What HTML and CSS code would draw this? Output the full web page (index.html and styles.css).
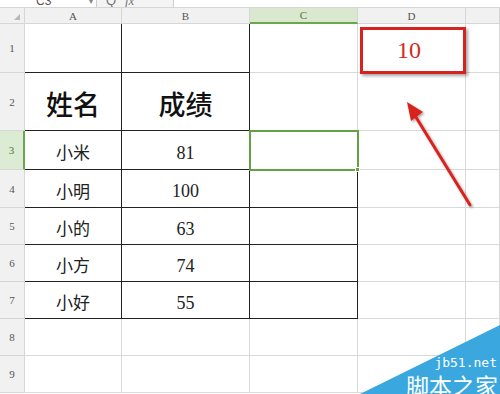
FILE: index.html
```html
<!DOCTYPE html>
<html>
<head>
<meta charset="utf-8">
<link rel="stylesheet" href="styles.css">
</head>
<body>
<div class="app">
  <div class="topbar">
    <div class="namebox"><span class="nb-text">C3</span><span class="nb-caret">▾</span></div>
    <div class="fxicons"><span class="fx-q">Q</span><span class="fx-f">fx</span></div>
    <div class="formula"></div>
  </div>
  <div class="sheet">
    <div class="corner"><span class="corner-tri"></span></div>
    <div class="colhead">A</div>
    <div class="colhead">B</div>
    <div class="colhead active">C</div>
    <div class="colhead">D</div>
    <div class="colhead"></div>

    <div class="rowhead">1</div>
    <div class="cell t tl"></div>
    <div class="cell t"></div>
    <div class="cell"></div>
    <div class="cell red">10</div>
    <div class="cell"></div>

    <div class="rowhead">2</div>
    <div class="cell t tl big">姓名</div>
    <div class="cell t big">成绩</div>
    <div class="cell"></div>
    <div class="cell"></div>
    <div class="cell"></div>

    <div class="rowhead active">3</div>
    <div class="cell t tl name">小米</div>
    <div class="cell t num">81</div>
    <div class="cell t sel"><span class="handle"></span></div>
    <div class="cell"></div>
    <div class="cell"></div>

    <div class="rowhead">4</div>
    <div class="cell t tl name">小明</div>
    <div class="cell t num">100</div>
    <div class="cell t"></div>
    <div class="cell"></div>
    <div class="cell"></div>

    <div class="rowhead">5</div>
    <div class="cell t tl name">小的</div>
    <div class="cell t num">63</div>
    <div class="cell t"></div>
    <div class="cell"></div>
    <div class="cell"></div>

    <div class="rowhead">6</div>
    <div class="cell t tl name">小方</div>
    <div class="cell t num">74</div>
    <div class="cell t"></div>
    <div class="cell"></div>
    <div class="cell"></div>

    <div class="rowhead">7</div>
    <div class="cell t tl name">小好</div>
    <div class="cell t num">55</div>
    <div class="cell t"></div>
    <div class="cell"></div>
    <div class="cell"></div>

    <div class="rowhead">8</div>
    <div class="cell"></div>
    <div class="cell"></div>
    <div class="cell"></div>
    <div class="cell"></div>
    <div class="cell"></div>

    <div class="rowhead">9</div>
    <div class="cell"></div>
    <div class="cell"></div>
    <div class="cell"></div>
    <div class="cell"></div>
    <div class="cell"></div>
  </div>

  <div class="redbox"></div>
  <svg class="arrow" width="500" height="394" viewBox="0 0 500 394">
    <defs>
      <filter id="sh" x="-20%" y="-20%" width="140%" height="140%">
        <feDropShadow dx="1.5" dy="1.5" stdDeviation="1" flood-color="#000" flood-opacity="0.35"/>
      </filter>
    </defs>
    <g filter="url(#sh)">
      <line x1="470" y1="205" x2="414" y2="114" stroke="#d9221c" stroke-width="3" stroke-linecap="round"/>
      <polygon points="407,102 423,112 411,121" fill="#d9221c"/>
    </g>
  </svg>
  <svg class="wm-tri" width="500" height="394" viewBox="0 0 500 394">
    <polygon points="360,394 500,394 500,325" fill="#3aa8de"/>
  </svg>
  <div class="wm-text">
    <div class="wm-url">jb51.net</div>
    <div class="wm-cn">脚本之家</div>
  </div>
</div>
</body>
</html>
```
FILE: styles.css
```css
* { box-sizing: border-box; }
html, body { margin: 0; padding: 0; background: #fff; }
.app {
  position: relative;
  width: 500px;
  height: 394px;
  overflow: hidden;
  font-family: "Liberation Serif", serif;
}
.topbar {
  height: 8px;
  display: flex;
  background: #f4f4f4;
  border-bottom: 1px solid #d6d6d6;
  overflow: hidden;
}
.namebox {
  width: 97px;
  background: #fff;
  border-right: 1px solid #cfcfcf;
  position: relative;
  font: 12px/12px "Liberation Sans", sans-serif;
  color: #555;
}
.nb-text { position: absolute; left: 36px; top: -5px; }
.nb-caret { position: absolute; left: 89px; top: -4px; font-size: 8px; color: #888; }
.fxicons {
  width: 76px;
  position: relative;
  font: 13px/13px "Liberation Serif", serif;
  color: #777;
}
.fx-q { position: absolute; left: 9px; top: -6px; font-family: "Liberation Sans", sans-serif; }
.fx-f { position: absolute; left: 28px; top: -6px; font-style: italic; }
.formula {
  flex: 1;
  background: #fff;
  border-left: 1px solid #cfcfcf;
}
.sheet {
  display: grid;
  grid-template-columns: 25px 97px 128px 108px 108px 34px;
  grid-template-rows: 16px 49px 58px 39px 38px 37px 37px 37px 37px 37px 38px;
}
.corner, .colhead, .rowhead {
  background: #f1f1f1;
  border-right: 1px solid #d6d6d6;
  border-bottom: 1px solid #d6d6d6;
  color: #555;
  font: 11px "Liberation Serif", serif;
  display: flex;
  align-items: center;
  justify-content: center;
}
.corner { position: relative; }
.corner-tri {
  position: absolute;
  right: 4px;
  bottom: 3px;
  width: 0; height: 0;
  border-left: 6px solid transparent;
  border-bottom: 6px solid #b8b8b8;
}
.colhead.active {
  background: #d9e8cf;
  border-bottom: 2px solid #6aa84f;
  color: #4b7a35;
}
.rowhead.active {
  background: #dcebd3;
  border-right: 2px solid #6aa84f;
  color: #4b7a35;
}
.cell {
  border-right: 1px solid #d9d9d9;
  border-bottom: 1px solid #d9d9d9;
  display: flex;
  align-items: center;
  justify-content: center;
  color: #1a1a1a;
  position: relative;
}
.cell.t {
  border-right-color: #222;
  border-bottom-color: #222;
}
.big {
  font: 500 27px "Noto Sans CJK SC", sans-serif;
  color: #111;
  padding-top: 3px;
}
.name {
  font: 17px "Noto Sans CJK SC", sans-serif;
  color: #222;
  padding-top: 3px;
}
.num {
  font: 18px "Liberation Serif", serif;
  color: #222;
  padding-top: 6px;
}
.red {
  font: 24px "Liberation Serif", serif;
  color: #d42a22;
  padding-top: 4px;
  padding-right: 5px;
}
.sel {
  outline: 2px solid #62a144;
  outline-offset: -1px;
  z-index: 2;
}
.handle {
  position: absolute;
  right: -3px;
  bottom: -3px;
  width: 5px;
  height: 5px;
  background: #62a144;
  border: 1px solid #fff;
}
.redbox {
  position: absolute;
  left: 360px;
  top: 27px;
  width: 106px;
  height: 47px;
  border: 3px solid #d7231f;
  box-shadow: 2px 2px 3px rgba(0,0,0,0.35);
}
.arrow, .wm-tri {
  position: absolute;
  left: 0;
  top: 0;
}
.wm-text {
  position: absolute;
  right: 2px;
  bottom: -3px;
  color: #fff;
  text-align: right;
}
.wm-url {
  font: 13px/14px "DejaVu Sans Mono", monospace;
  margin-right: 1px;
  margin-bottom: 3px;
}
.wm-cn {
  font: 23px/24px "Noto Sans CJK SC", sans-serif;
}
```
